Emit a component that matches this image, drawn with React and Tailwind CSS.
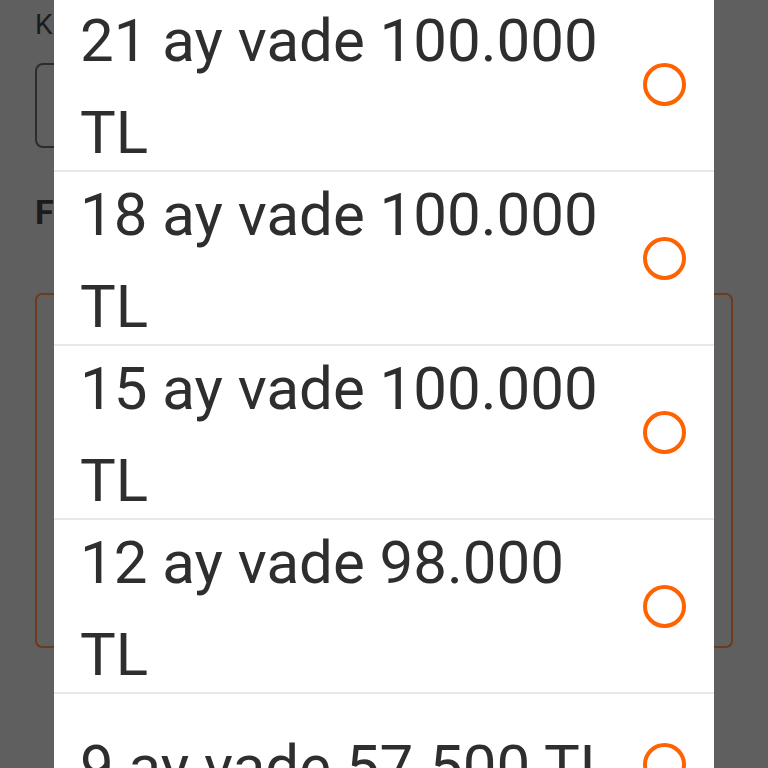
import React from "react";

const rows = [
  "21 ay vade 100.000 TL",
  "18 ay vade 100.000 TL",
  "15 ay vade 100.000 TL",
  "12 ay vade 98.000 TL",
];

function Radio() {
  return (
    <div className="w-[43px] h-[43px] shrink-0 rounded-full border-4 border-[#ff6200] bg-white" />
  );
}

export default function App() {
  return (
    <div
      className="relative w-[768px] h-[768px] overflow-hidden bg-[#5f5f5f]"
      style={{ fontFamily: "Roboto, 'Open Sans', sans-serif" }}
    >
      {/* dimmed page behind the dialog */}
      <div className="flex flex-col px-[35px] pt-[6px]">
        <div className="text-[28px] leading-[38px] text-[#1c1c1c]">Kredi tutarı</div>
        <div className="mt-[19px] h-[85px] w-[420px] rounded-[8px] border-2 border-[#2c2c2c]" />
        <div className="mt-[44px] text-[34px] leading-[40px] font-bold text-[#1c1c1c]">Faiz oranı</div>
        <div className="mt-[61px] h-[355px] w-full rounded-[7px] border-2 border-[#6e3a1c]" />
      </div>

      {/* dialog */}
      <div className="absolute left-[54px] right-[54px] top-[-2px] bottom-0 bg-white overflow-hidden">
        {rows.map((r) => (
          <div
            key={r}
            className="h-[174px] flex items-center border-b-2 border-[#e8e8e8] pl-[26px] pr-[28px] gap-[24px]"
          >
            <p className="flex-1 pt-[6px] text-[60px] leading-[92px] text-[#2e2e2e]">
              {r}
            </p>
            <Radio />
          </div>
        ))}
        <div className="h-[140px] flex items-center pl-[26px] pr-[28px] gap-[24px]">
          <p className="flex-1 pt-[6px] text-[60px] leading-[92px] text-[#2e2e2e] whitespace-nowrap">
            9 ay vade 57.500 TL
          </p>
          <Radio />
        </div>
      </div>
    </div>
  );
}
